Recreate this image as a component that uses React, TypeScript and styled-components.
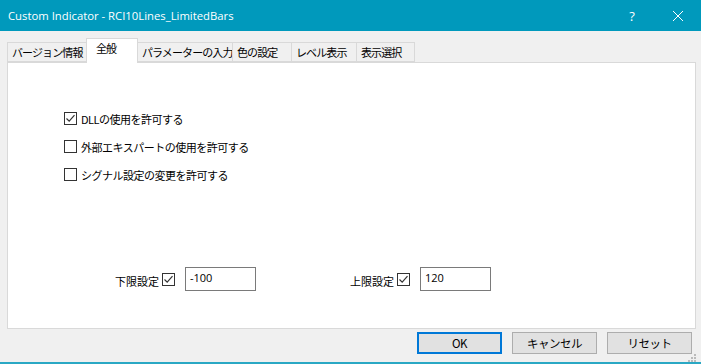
import React, { useState } from 'react';
import styled, { createGlobalStyle } from 'styled-components';

const GlobalStyle = createGlobalStyle`
  html, body {
    margin: 0;
    padding: 0;
    background: #f0f0f0;
  }
  body {
    font-family: "Noto Sans CJK JP", "Noto Sans", "Liberation Sans", sans-serif;
    font-size: 11px;
    color: #000;
  }
`;

const Window = styled.div`
  width: 701px;
  height: 364px;
  display: flex;
  flex-direction: column;
  background: #f0f0f0;
  border-bottom: 2px solid #2aa8c4;
  box-sizing: border-box;
  overflow: hidden;
`;

const TitleBar = styled.div`
  height: 31px;
  flex: none;
  background: #0099bc;
  color: #fff;
  display: flex;
  align-items: center;
  padding-left: 8px;
  font-family: "Open Sans", "Noto Sans", sans-serif;
  font-size: 11.3px;
`;

const Title = styled.div`
  flex: 1;
`;

const TitleButton = styled.div`
  width: 46px;
  height: 31px;
  display: flex;
  align-items: center;
  justify-content: center;
  color: #fff;
  font-size: 13px;
`;

const Body = styled.div`
  flex: 1;
  display: flex;
  flex-direction: column;
  padding: 7px 5px 0 7px;
`;

const TabStrip = styled.div`
  display: flex;
  align-items: flex-end;
  height: 24px;
  padding-left: 1px;
  position: relative;
  z-index: 1;
`;

const Tab = styled.div<{ $active?: boolean; $width: number }>`
  box-sizing: border-box;
  width: ${({ $width }) => $width + 1}px;
  height: ${({ $active }) => ($active ? '25px' : '20px')};
  margin-bottom: ${({ $active }) => ($active ? '-1px' : '0')};
  padding: ${({ $active }) => ($active ? '1px 0 0 9px' : '1px 0 0 4px')};
  border: 1px solid #d9d9d9;
  border-bottom: ${({ $active }) => ($active ? 'none' : '1px solid #d9d9d9')};
  margin-left: -1px;
  background: ${({ $active }) => ($active ? '#fff' : '#f0f0f0')};
  display: flex;
  align-items: ${({ $active }) => ($active ? 'flex-start' : 'center')};
  font-size: 11px;
  letter-spacing: -0.9px;
  white-space: nowrap;
  overflow: hidden;
  line-height: 17px;
`;

const Panel = styled.div`
  height: 267px;
  box-sizing: border-box;
  background: #fff;
  border: 1px solid #d9d9d9;
  display: flex;
  flex-direction: column;
  padding: 47px 0 0 56px;
`;

const OptionList = styled.div`
  display: flex;
  flex-direction: column;
  gap: 11px;
`;

const Option = styled.label`
  display: flex;
  align-items: center;
  gap: 4px;
  height: 17px;
  font-size: 11px;
  letter-spacing: -0.5px;
`;

const Box = styled.span`
  width: 13px;
  height: 13px;
  box-sizing: border-box;
  border: 1px solid #333;
  background: #fff;
  display: inline-flex;
  align-items: center;
  justify-content: center;
  flex: none;
`;

const Limits = styled.div`
  display: flex;
  margin-top: 84px;
  padding-left: 51px;
  gap: 94px;
`;

const LimitGroup = styled.div`
  display: flex;
  align-items: center;
`;

const LimitLabel = styled.span`
  font-size: 11px;
  margin-right: 3px;
  margin-top: 4px;
`;

const LimitInput = styled.div`
  width: 71px;
  height: 24px;
  box-sizing: border-box;
  border: 1px solid #7a7a7a;
  margin-left: 10px;
  padding: 2px 0 0 4px;
  font-family: "Open Sans", "Noto Sans", sans-serif;
  font-size: 11px;
`;

const Footer = styled.div`
  display: flex;
  justify-content: flex-end;
  gap: 10px;
  padding: 3px 4px 0 0;
  position: relative;
`;

const Button = styled.div<{ $primary?: boolean }>`
  width: 85px;
  height: 22px;
  box-sizing: border-box;
  border: ${({ $primary }) => ($primary ? '2px solid #0078d7' : '1px solid #adadad')};
  background: #e1e1e1;
  display: flex;
  align-items: center;
  justify-content: center;
  font-size: 11.5px;
  letter-spacing: -0.5px;
`;

const Grip = styled.svg`
  position: absolute;
  right: 0;
  bottom: -8px;
`;

const Check = () => (
  <svg width="11" height="11" viewBox="0 0 11 11">
    <path d="M1.5 5.5 L4.2 8.2 L9.5 2.2" fill="none" stroke="#333" strokeWidth="1.2" />
  </svg>
);

const CheckBox = ({ checked }: { checked?: boolean }) => (
  <Box>{checked && <Check />}</Box>
);

const tabs = [
  { label: 'バージョン情報', width: 79 },
  { label: '全般', width: 51 },
  { label: 'パラメーターの入力', width: 95 },
  { label: '色の設定', width: 59 },
  { label: 'レベル表示', width: 65 },
  { label: '表示選択', width: 58 },
];

export default function App() {
  const [active] = useState(1);
  return (
    <>
      <GlobalStyle />
      <Window>
        <TitleBar>
          <Title>Custom Indicator - RCI10Lines_LimitedBars</Title>
          <TitleButton>?</TitleButton>
          <TitleButton>
            <svg width="12" height="12" viewBox="0 0 12 12">
              <path d="M1 1 L11 11 M11 1 L1 11" stroke="#fff" strokeWidth="1" />
            </svg>
          </TitleButton>
        </TitleBar>
        <Body>
          <TabStrip>
            {tabs.map((t, i) => (
              <Tab key={t.label} $width={t.width} $active={i === active}>{t.label}</Tab>
            ))}
          </TabStrip>
          <Panel>
            <OptionList>
              <Option><CheckBox checked />DLLの使用を許可する</Option>
              <Option><CheckBox />外部エキスパートの使用を許可する</Option>
              <Option><CheckBox />シグナル設定の変更を許可する</Option>
            </OptionList>
            <Limits>
              <LimitGroup>
                <LimitLabel>下限設定</LimitLabel>
                <CheckBox checked />
                <LimitInput>-100</LimitInput>
              </LimitGroup>
              <LimitGroup>
                <LimitLabel>上限設定</LimitLabel>
                <CheckBox checked />
                <LimitInput>120</LimitInput>
              </LimitGroup>
            </Limits>
          </Panel>
          <Footer>
            <Button $primary>OK</Button>
            <Button>キャンセル</Button>
            <Button>リセット</Button>
            <Grip width="8" height="8" viewBox="0 0 8 8">
              <rect x="6" y="0" width="2" height="2" fill="#bbb" />
              <rect x="3" y="3" width="2" height="2" fill="#bbb" />
              <rect x="6" y="3" width="2" height="2" fill="#bbb" />
              <rect x="0" y="6" width="2" height="2" fill="#bbb" />
              <rect x="3" y="6" width="2" height="2" fill="#bbb" />
              <rect x="6" y="6" width="2" height="2" fill="#bbb" />
            </Grip>
          </Footer>
        </Body>
      </Window>
    </>
  );
}
